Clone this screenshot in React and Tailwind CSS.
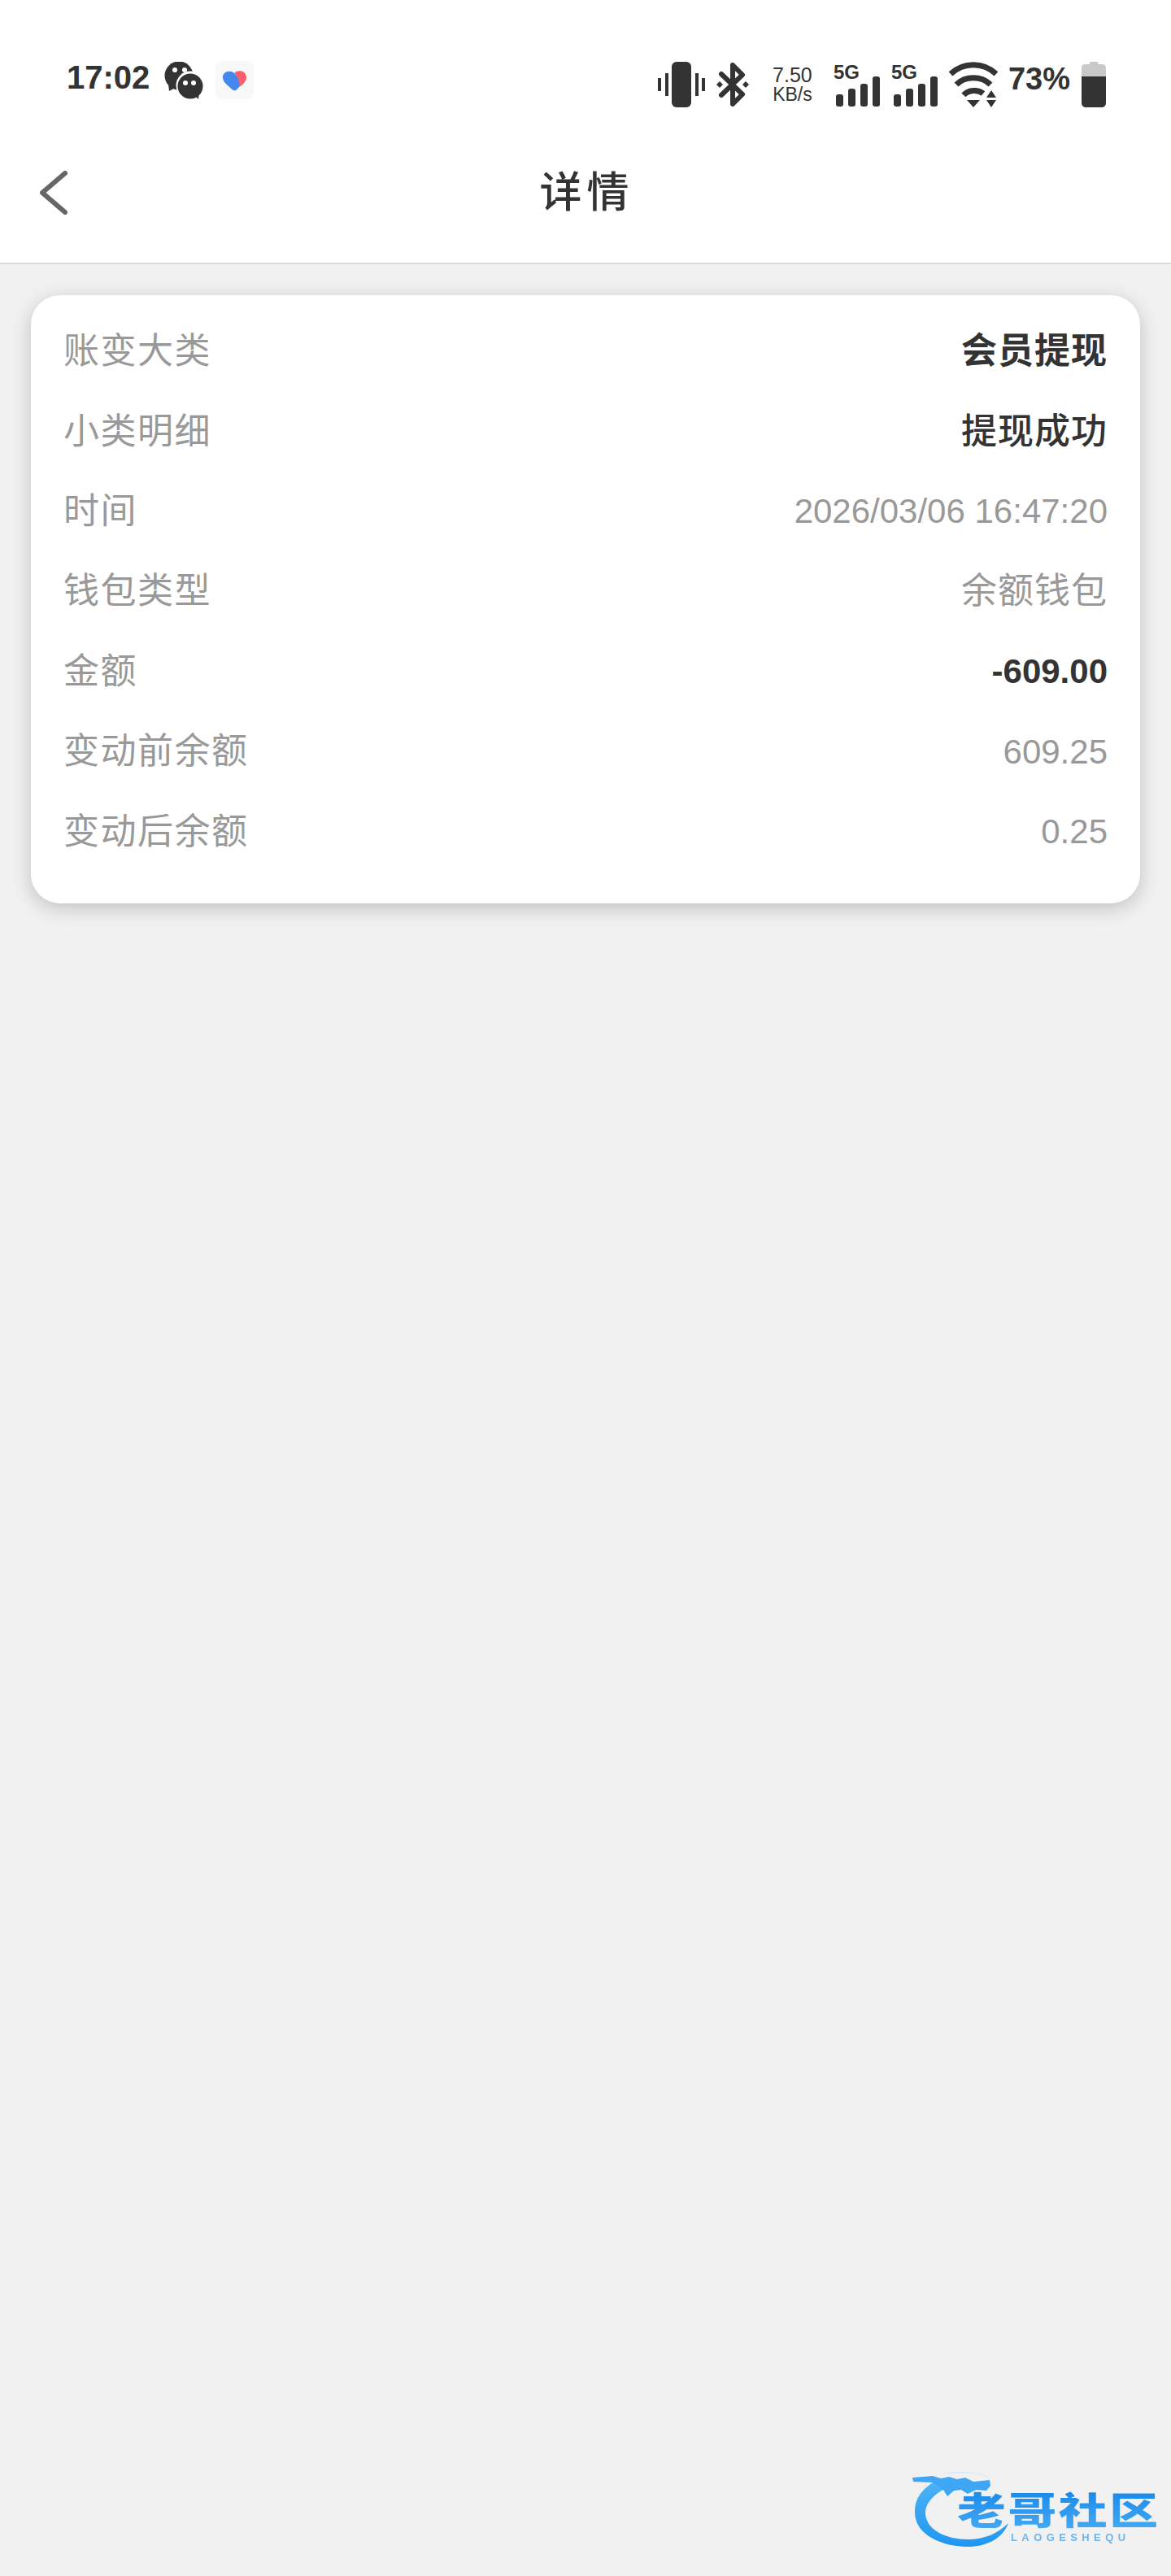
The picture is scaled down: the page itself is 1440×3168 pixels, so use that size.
import React from 'react';

const rows = [
    { label: '账变大类', value: '会员提现', valueClass: 'text-[#333] font-bold text-[44px] tracking-[1px]' },
    { label: '小类明细', value: '提现成功', valueClass: 'text-[#333] font-medium text-[44px] tracking-[1px]' },
    { label: '时间', value: '2026/03/06 16:47:20', valueClass: 'text-[#999] text-[42px]' },
    { label: '钱包类型', value: '余额钱包', valueClass: 'text-[#999] text-[44px] tracking-[1px]' },
    { label: '金额', value: '-609.00', valueClass: 'text-[#333] font-bold text-[42px]' },
    { label: '变动前余额', value: '609.25', valueClass: 'text-[#999] text-[42px]' },
    { label: '变动后余额', value: '0.25', valueClass: 'text-[#999] text-[42px]' }
];

const WechatIcon = () => (
    <svg width="48" height="46" viewBox="0 0 48 46">
        <circle cx="18" cy="17" r="17.5" fill="#333" />
        <path d="M5 27 L6 36 L15 31 Z" fill="#333" />
        <circle cx="32" cy="29" r="17.5" fill="#fff" />
        <circle cx="32" cy="30" r="15.5" fill="#333" />
        <path d="M36 40 L42 46 L43 36 Z" fill="#333" />
        <circle cx="13" cy="10" r="3" fill="#fff" />
        <circle cx="25" cy="10" r="3" fill="#fff" />
        <circle cx="26" cy="26" r="3" fill="#fff" />
        <circle cx="36" cy="26" r="3" fill="#fff" />
    </svg>
);

const HealthIcon = () => (
    <div className="flex h-[47px] w-[47px] items-center justify-center rounded-[9px] bg-[#f8f8f8]">
        <svg width="31" height="26" viewBox="0 0 32 26">
            <path d="M16 3 C20 -1 31 0 31 9 C31 13 27 18 22 21 C21 14 19 8 16 3 Z" fill="#f9616a" />
            <path d="M1 9 C1 1 12 -1 17 5 C21 10 23 17 22 21 L18 25 C17 26 15 26 14 25 C8 20 1 15 1 9 Z" fill="#4488ee" />
        </svg>
    </div>
);

const VibrateIcon = () => (
    <svg width="58" height="56" viewBox="0 0 58 56" fill="#333">
        <rect x="17" y="0" width="24" height="56" rx="6" />
        <rect x="0" y="20" width="4" height="16" />
        <rect x="9" y="14" width="4" height="28" />
        <rect x="46" y="14" width="4" height="28" />
        <rect x="54" y="20" width="4" height="16" />
    </svg>
);

const BluetoothIcon = () => (
    <svg width="40" height="56" viewBox="0 0 40 56">
        <path d="M6 15 L32 40 L20 52 L20 4 L32 16 L6 41" fill="none" stroke="#333" strokeWidth="6" strokeLinejoin="round" strokeLinecap="round" />
        <path d="M0 28 L4 24 L8 28 L4 32 Z M32 28 L36 24 L40 28 L36 32 Z" fill="#333" />
    </svg>
);

const SignalIcon = () => (
    <svg width="57" height="57" viewBox="0 0 57 57" fill="#333">
        <text x="0" y="22" fontSize="24" fontWeight="700">5G</text>
        <rect x="3" y="41" width="9" height="15" rx="3" />
        <rect x="18" y="34" width="9" height="22" rx="3" />
        <rect x="33" y="28" width="9" height="28" rx="3" />
        <rect x="48" y="19" width="9" height="37" rx="3" />
    </svg>
);

const WifiIcon = () => (
    <svg width="60" height="56" viewBox="0 0 60 56">
        <path d="M2 15 C18 0 42 0 58 15" fill="none" stroke="#333" strokeWidth="7" />
        <path d="M9 28 C20 17 40 17 51 28" fill="none" stroke="#333" strokeWidth="7" />
        <path d="M18 41 C24 34 36 34 42 39" fill="none" stroke="#333" strokeWidth="7" />
        <path d="M22 47 L38 47 L30 56 Z" fill="#333" />
        <path d="M46 44 L58 44 L52 35 Z M46 47 L58 47 L52 56 Z" fill="#333" />
    </svg>
);

const BatteryIcon = () => (
    <svg width="30" height="56" viewBox="0 0 30 56">
        <path d="M0 8 C0 4 2 3 5 3 L10 3 L10 0 L20 0 L20 3 L25 3 C28 3 30 4 30 8 L30 18 L0 18 Z" fill="#c9c9c9" />
        <path d="M0 18 L30 18 L30 50 C30 54 28 56 24 56 L6 56 C2 56 0 54 0 50 Z" fill="#333" />
    </svg>
);

const Logo = () => (
    <div className="absolute left-[1115px] top-[3040px] h-[100px] w-[310px] blur-[0.6px]">
        <svg width="130" height="100" viewBox="0 0 130 100">
            <defs>
                <linearGradient id="ring" x1="0" y1="0" x2="0" y2="1">
                    <stop offset="0" stopColor="#4db2f7" />
                    <stop offset="1" stopColor="#1f97f0" />
                </linearGradient>
            </defs>
            <path d="M32 13 C15 25 10 35 10 50 C10 78 45 92 75 92 C98 92 118 82 125 63 C112 76 95 83 75 83 C50 83 23 72 23 50 C23 38 35 25 55 17 Z" fill="url(#ring)" />
            <path d="M7 7 L32 5 L42 8 L52 6 L62 9 L72 7 L82 12 L102 10 L103 17 L98 23 L85 22 L75 27 L67 22 L58 23 L50 30 L45 22 L32 13 L8 12 Z" fill="#3ea6f5" />
            <path d="M45 2 C70 -1 95 0 103 9" fill="none" stroke="#cfe6f8" strokeWidth="1" />
        </svg>
        <div className="absolute left-[62px] top-[18px] origin-left scale-x-[1.3] whitespace-nowrap bg-gradient-to-b from-[#0f86e8] to-[#49aef5] bg-clip-text text-[46px] leading-[60px] font-black tracking-[2px] text-transparent">
            老哥社区
        </div>
        <div className="absolute left-[128px] top-[74px] text-[13px] leading-[14px] font-bold tracking-[5.4px] text-[#6fb4ea]">
            LAOGESHEQU
        </div>
    </div>
);

const App = () => {
    return (
        <div className="relative h-[3168px] w-[1440px] overflow-hidden bg-[#f1f1f1] font-['Liberation_Sans','Noto_Sans_CJK_SC',sans-serif]">
            <div className="border-b-2 border-[#d9d9d9] bg-white">
                <div className="flex h-[150px] items-start justify-between pl-[82px] pr-[80px] pt-[75px] text-[#333]">
                    <div className="flex items-center">
                        <span className="-mt-[8px] text-[40px] leading-[46px] font-bold">17:02</span>
                        <div className="ml-[18px]"><WechatIcon /></div>
                        <div className="ml-[15px]"><HealthIcon /></div>
                    </div>
                    <div className="flex items-center">
                        <VibrateIcon />
                        <div className="ml-[14px]"><BluetoothIcon /></div>
                        <div className="ml-[29px] flex w-[49px] flex-col items-center">
                            <span className="text-[25px] leading-[25px]">7.50</span>
                            <span className="text-[23px] leading-[22px]">KB/s</span>
                        </div>
                        <div className="ml-[26px] flex items-center gap-[14px]">
                            <SignalIcon />
                            <SignalIcon />
                            <WifiIcon />
                        </div>
                        <span className="ml-[13px] -mt-[14px] text-[38px] leading-[44px] font-bold">73%</span>
                        <div className="ml-[14px]"><BatteryIcon /></div>
                    </div>
                </div>
                <div className="grid h-[173px] grid-cols-[1fr_auto_1fr] items-center pl-[49px]">
                    <svg width="34" height="54" viewBox="0 0 34 54" fill="none">
                        <path d="M31 3 L3 27 L31 51" stroke="#666" strokeWidth="6" strokeLinecap="round" strokeLinejoin="round" />
                    </svg>
                    <h1 className="-ml-[46px] text-[52px] leading-[60px] font-medium tracking-[6px] text-[#333]">详情</h1>
                    <div />
                </div>
            </div>

            <div className="mx-[38px] mt-[38px] rounded-[36px] bg-white px-[40px] pt-[20px] pb-[39px] shadow-[0_6px_24px_rgba(0,0,0,0.2)]">
                {rows.map((row) => (
                    <div key={row.label} className="flex h-[98.4px] items-center justify-between">
                        <span className="text-[44px] tracking-[1.5px] text-[#999]">{row.label}</span>
                        <span className={row.valueClass}>{row.value}</span>
                    </div>
                ))}
            </div>

            <Logo />
        </div>
    );
};

export default App;
